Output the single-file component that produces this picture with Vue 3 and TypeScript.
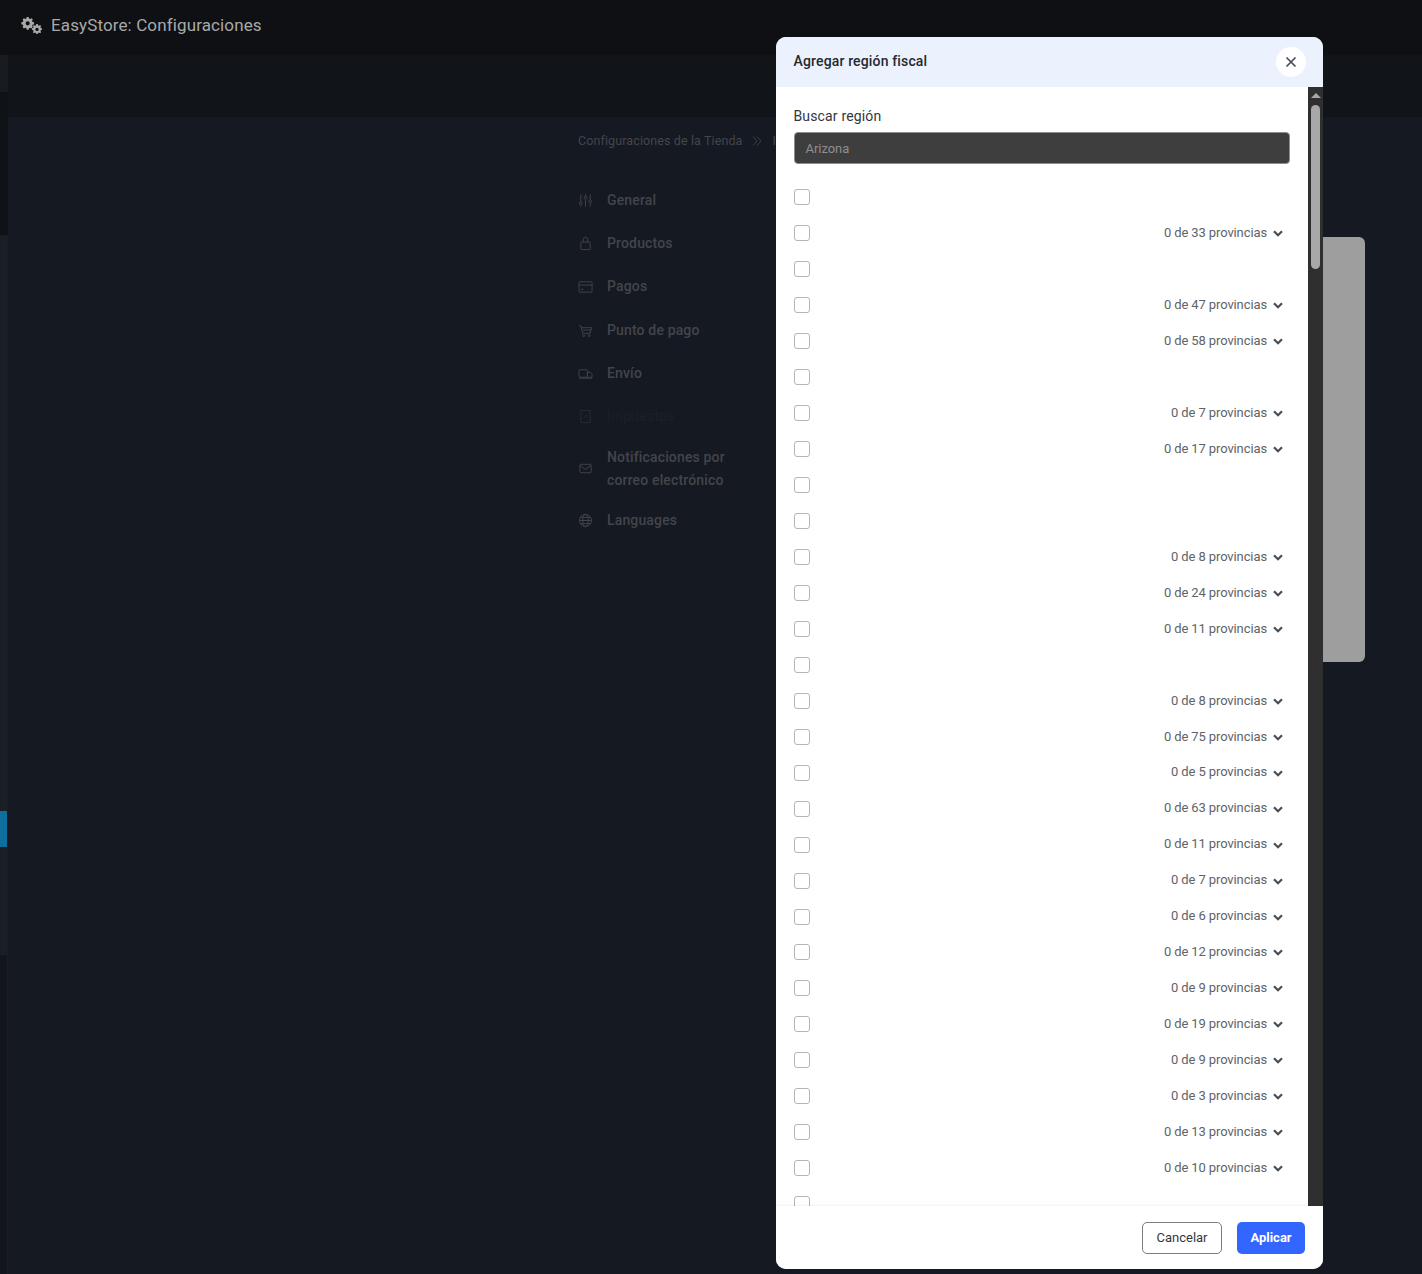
<script setup lang="ts">
const counts: (number | null)[] = [
  null, 33, null, 47, 58, null, 7, 17, null, null, 8, 24, 11, null, 8, 75, 5, 63,
  11, 7, 6, 12, 9, 19, 9, 3, 13, 10, null,
]
const navItems = [
  { label: 'General', icon: 'sliders' },
  { label: 'Productos', icon: 'lock' },
  { label: 'Pagos', icon: 'card' },
  { label: 'Punto de pago', icon: 'cart' },
  { label: 'Envío', icon: 'truck' },
  { label: 'Impuestos', icon: 'receipt', faint: true },
  { label: 'Notificaciones por correo electrónico', icon: 'mail' },
  { label: 'Languages', icon: 'globe' },
]
</script>

<template>
  <div class="page">
    <header class="topbar">
      <svg class="gears" viewBox="0 0 24 20" width="23" height="19" aria-hidden="true">
        <g fill="#a9a9a9">
          <path fill-rule="evenodd" d="M7 1h2l.4 1.6 1.2.5L12 2.3l1.4 1.4-.8 1.4.5 1.2 1.6.4v2l-1.6.4-.5 1.2.8 1.4L12 13.1l-1.4-.8-1.2.5L9 14.4H7l-.4-1.6-1.2-.5-1.4.8L2.600 11.700l.8-1.400-.5-1.200L1.300 8.700v-2l1.600-.4.500-1.200-.8-1.400L4 2.300l1.400.8 1.200-.5zM8 5.500a2.200 2.200 0 1 0 0 4.400 2.200 2.200 0 0 0 0-4.400z" />
          <path fill-rule="evenodd" d="M17 8.500h1.600l.3 1.300 1 .4 1.100-.7 1.100 1.100-.7 1.100.4 1 1.200.3v1.600l-1.200.3-.4 1 .7 1.100-1.100 1.100-1.100-.7-1 .4-.3 1.200H17l-.3-1.200-1-.4-1.100.7-1.100-1.100.7-1.100-.4-1-1.300-.3v-1.600l1.300-.3.4-1-.7-1.100 1.100-1.100 1.100.7 1-.4zM17.800 12.300a1.800 1.800 0 1 0 0 3.600 1.800 1.800 0 0 0 0-3.600z" />
        </g>
      </svg>
      <span class="title">EasyStore: Configuraciones</span>
    </header>

    <div class="workspace">
      <aside class="rail">
        <div class="rail-light"></div>
        <div class="rail-gap"></div>
        <div class="rail-main">
          <div class="rail-active"></div>
        </div>
        <div class="rail-end"></div>
      </aside>

      <div class="content">
        <div class="toolbar"></div>
        <main class="body">
          <div class="settings">
            <div class="breadcrumb">
              <span>Configuraciones de la Tienda</span>
              <svg viewBox="0 0 12 12" width="12" height="12" class="crumb-sep" aria-hidden="true">
                <path d="M2 1.500 6 6l-4 4.500M6 1.500 10 6l-4 4.500" fill="none" stroke="#3b3e44" stroke-width="1" />
              </svg>
              <span>I</span>
            </div>
            <nav class="nav">
              <div v-for="item in navItems" :key="item.label" class="nav-item" :class="{ faint: item.faint }">
                <svg class="nav-icon" viewBox="0 0 16 16" width="16" height="16" fill="none" stroke="currentColor" stroke-width="1" aria-hidden="true">
                  <template v-if="item.icon === 'sliders'">
                    <path d="M3 1.500v8M3 13v1.500M8 1.500v2M8 7v7.500M13 1.500v6M13 11v3.500" />
                    <circle cx="3" cy="11" r="1.500" /><circle cx="8" cy="5" r="1.500" /><circle cx="13" cy="9" r="1.500" />
                  </template>
                  <template v-else-if="item.icon === 'lock'">
                    <rect x="3" y="6.500" width="10" height="8" rx="1" />
                    <path d="M5.500 6.500V4a2.500 2.500 0 0 1 5 0v2.500" />
                  </template>
                  <template v-else-if="item.icon === 'card'">
                    <rect x="1" y="3" width="14" height="11" rx="1" />
                    <path d="M1 6.500h14M3 11h3" />
                  </template>
                  <template v-else-if="item.icon === 'cart'">
                    <path d="M1 3h2l2 8h8l1.500-6H4" />
                    <circle cx="6" cy="13.500" r="1" /><circle cx="12" cy="13.500" r="1" />
                    <path d="M5 7.500h9" />
                  </template>
                  <template v-else-if="item.icon === 'truck'">
                    <rect x="1" y="4" width="9" height="8" rx="1" />
                    <path d="M10 6.500h3l2 2.500v3h-5z" />
                    <path d="M1 13h14" />
                  </template>
                  <template v-else-if="item.icon === 'receipt'">
                    <path d="M3 1.500h10v13H3z" />
                    <path d="M6 9.500l4-4M6 5.500h.5M9.500 9.500h.5" />
                  </template>
                  <template v-else-if="item.icon === 'mail'">
                    <rect x="2" y="3.500" width="12" height="9" rx="1" />
                    <path d="M2.500 5 8 9l5.500-4" />
                  </template>
                  <template v-else>
                    <circle cx="8" cy="8" r="6.500" />
                    <ellipse cx="8" cy="8" rx="3" ry="6.500" />
                    <path d="M1.500 8h13M2.500 4.700h11M2.500 11.300h11" />
                  </template>
                </svg>
                <span class="nav-label">{{ item.label }}</span>
              </div>
            </nav>
          </div>
          <div class="panel"></div>
        </main>
      </div>
    </div>

    <section class="modal">
      <header class="modal-head">
        <h2>Agregar región fiscal</h2>
        <button class="close" type="button" aria-label="Cerrar">
          <svg viewBox="0 0 12 12" width="12" height="12" aria-hidden="true">
            <path d="M1.500 1.500l9 9M10.500 1.500l-9 9" stroke="#4a4d52" stroke-width="1.700" fill="none" />
          </svg>
        </button>
      </header>

      <div class="modal-mid">
        <div class="modal-body">
          <label class="search-label">Buscar región</label>
          <div class="search">Arizona</div>
          <div class="rows">
            <div v-for="(c, i) in counts" :key="i" class="row">
              <span class="check"></span>
              <template v-if="c !== null">
                <span class="count">0 de {{ c }} provincias</span>
                <svg class="chev" viewBox="0 0 10 7" width="10" height="7" aria-hidden="true">
                  <path d="M1 1.200 5 5.200l4-4" fill="none" stroke="#4a4d52" stroke-width="2.200" />
                </svg>
              </template>
            </div>
          </div>
        </div>
        <div class="scrollbar">
          <span class="arrow"></span>
          <span class="thumb"></span>
        </div>
      </div>

      <footer class="modal-foot">
        <button class="btn ghost" type="button">Cancelar</button>
        <button class="btn primary" type="button">Aplicar</button>
      </footer>
    </section>
  </div>
</template>

<style>
html,
body {
  margin: 0;
  background: #151921;
}
</style>

<style scoped>
* {
  box-sizing: border-box;
}
.page {
  position: relative;
  width: 1422px;
  height: 1274px;
  overflow: hidden;
  background: #151921;
  font-family: Roboto, "Liberation Sans", sans-serif;
  display: flex;
  flex-direction: column;
}
.topbar {
  height: 55px;
  flex: none;
  background: #0e1014;
  display: flex;
  align-items: center;
  padding-left: 20px;
  gap: 8px;
}
.gears {
  margin-top: -5px;
}
.title {
  font-size: 17px;
  color: #a9a9a9;
  line-height: 20px;
  margin-top: -5px;
  letter-spacing: 0.120px;
}
.workspace {
  flex: 1;
  display: flex;
  min-height: 0;
}
.rail {
  width: 8px;
  flex: none;
  display: flex;
  flex-direction: column;
  background: #181c24;
}
.rail-light {
  height: 37px;
  background: #181b20;
  flex: none;
}
.rail-gap {
  height: 143px;
  background: #0f1217;
  flex: none;
}
.rail-main {
  height: 720px;
  flex: none;
  background: #1a1e26;
  padding-top: 576px;
  width: 7px;
}
.rail-active {
  height: 36px;
  background: #0f6f9c;
}
.rail-end {
  flex: 1;
  width: 7px;
  background: #12151b;
}
.content {
  flex: 1;
  min-width: 0;
  display: flex;
  flex-direction: column;
}
.toolbar {
  height: 62px;
  flex: none;
  background: #111419;
}
.body {
  flex: 1;
  display: flex;
  padding-left: 570px;
  padding-right: 57px;
}
.settings {
  width: 222px;
  flex: none;
  padding-top: 14px;
}
.breadcrumb {
  display: flex;
  align-items: center;
  font-size: 12.500px;
  letter-spacing: 0.110px;
  color: #43464c;
  height: 18px;
  white-space: nowrap;
}
.crumb-sep {
  margin: 2px 9px 0;
}
.nav {
  margin-top: 29.600px;
  display: flex;
  flex-direction: column;
  gap: 0;
}
.nav-item {
  display: flex;
  align-items: center;
  min-height: 43.300px;
  gap: 14px;
  color: #42454b;
  font-size: 14px;
  font-weight: 500;
  line-height: 23px;
  letter-spacing: 0.150px;
}
.nav-item:nth-child(7) {
  min-height: 60.500px;
}
.nav-item.faint {
  color: #2a2d33;
}
.nav-item.faint .nav-label {
  color: #1b1f27;
}
.nav-icon {
  flex: none;
  width: 15px;
  height: 15px;
}
.nav-label {
  width: 130px;
}
.panel {
  flex: 1;
  margin-top: 120px;
  height: 425px;
  border-radius: 6px;
  background: #9e9e9e;
}
.modal {
  position: absolute;
  left: 776px;
  top: 37px;
  width: 547px;
  height: 1232px;
  border-radius: 10px;
  background: #fff;
  display: flex;
  flex-direction: column;
  overflow: hidden;
}
.modal-head {
  height: 50px;
  flex: none;
  background: #ebf2fd;
  display: flex;
  align-items: center;
  justify-content: space-between;
  padding: 0 17px 0 17.500px;
}
.modal-head h2 {
  margin: 0;
  font-size: 14px;
  font-weight: 500;
  color: #24292f;
  margin-top: -2px;
  letter-spacing: 0.150px;
}
.close {
  width: 30px;
  height: 30px;
  border: 0;
  border-radius: 50%;
  background: #fff;
  padding: 0;
  display: flex;
  align-items: center;
  justify-content: center;
}
.modal-mid {
  flex: 1;
  min-height: 0;
  display: flex;
}
.modal-body {
  flex: 1;
  min-width: 0;
  overflow: hidden;
  padding: 19px 18px 0;
}
.search-label {
  display: block;
  font-size: 14px;
  line-height: 20px;
  color: #33373c;
  letter-spacing: 0.150px;
  margin-left: -0.500px;
}
.search {
  margin-top: 6px;
  height: 32px;
  border-radius: 4px;
  background: #3e3e3e;
  border: 1px solid #8c8c8c;
  color: #8f8f8f;
  font-size: 13px;
  line-height: 32px;
  padding-left: 10.500px;
  letter-spacing: -0.050px;
}
.rows {
  margin-top: 15.490px;
}
.row {
  height: 35.960px;
  display: flex;
  align-items: center;
  padding-right: 7px;
}
.check {
  width: 16px;
  height: 16px;
  border: 1px solid #b5b5b5;
  border-radius: 3px;
  background: #fff;
  margin-right: auto;
}
.count {
  font-size: 13px;
  color: #5f6368;
  margin-right: 6px;
  margin-bottom: 1.500px;
  letter-spacing: -0.110px;
}
.chev {
  margin-top: 1px;
}
.scrollbar {
  width: 15px;
  flex: none;
  background: #2f2f2f;
  position: relative;
}
.arrow {
  position: absolute;
  left: 3px;
  top: 6px;
  width: 0;
  height: 0;
  border-left: 5px solid transparent;
  border-right: 5px solid transparent;
  border-bottom: 5px solid #a8a8a8;
}
.thumb {
  position: absolute;
  left: 3px;
  top: 18px;
  width: 9px;
  height: 164px;
  border-radius: 5px;
  background: #a8a8a8;
}
.modal-foot {
  height: 63px;
  flex: none;
  background: #fff;
  box-shadow: 0 -1px 2px rgba(0, 0, 0, 0.06);
  position: relative;
  display: flex;
  justify-content: flex-end;
  align-items: flex-start;
  gap: 15px;
  padding: 16px 18px 0 0;
}
.btn {
  height: 32px;
  border-radius: 5px;
  font-family: inherit;
  font-size: 13px;
  padding: 0 0 2px;
}
.ghost {
  width: 80px;
  background: #fff;
  border: 1px solid #7d7d7d;
  color: #33373c;
}
.primary {
  width: 68px;
  background: #3366ff;
  border: 0;
  color: #fff;
  font-weight: 700;
}
</style>
